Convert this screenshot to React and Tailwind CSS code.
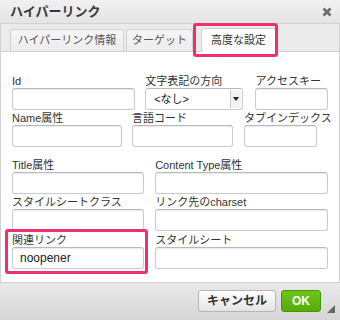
import React from "react";

const font = "font-['Liberation_Sans','Noto_Sans_CJK_JP',sans-serif]";

const Field = ({ label, value, className }) => (
  <div className={className}>
    <div className="h-[13px] text-[11px] leading-[13px] text-[#333] whitespace-nowrap">
      {label}
    </div>
    <div className="h-[22px] rounded-[3px] border border-[#c9cccf] border-t-[#b6b9bd] bg-white shadow-[inset_0_1px_1px_rgba(0,0,0,0.08)] px-[7px] text-[12px] leading-[20px] text-[#222]">
      {value}
    </div>
  </div>
);

const App = () => {
  return (
    <div className={`${font} relative w-[340px] h-[320px] flex flex-col overflow-hidden bg-white`}>
      {/* title bar */}
      <div className="h-[24px] shrink-0 flex items-center justify-between pl-[10px] pr-[8px] bg-linear-to-b from-[#f1f1f1] to-[#e4e4e4] border-b border-[#d3d3d3]">
        <span className="text-[13px] font-bold text-[#3a3a3a]">ハイパーリンク</span>
        <svg width="10" height="10" viewBox="0 0 10 10">
          <path d="M1.5 1.5 L8.5 8.5 M8.5 1.5 L1.5 8.5" stroke="#6b6b6b" strokeWidth="2.6" />
        </svg>
      </div>

      {/* tabs */}
      <div className="h-[28px] shrink-0 flex items-end pl-[9px] bg-[#ebebeb] border-b border-[#d1d1d1] border-x">
        <div className="w-[114px] h-[23px] -mb-px flex items-center justify-center rounded-t-[3px] border border-[#d1d1d1] bg-linear-to-b from-[#f6f6f6] to-[#ececec] text-[11px] text-[#555] whitespace-nowrap">
          ハイパーリンク情報
        </div>
        <div className="ml-[2px] w-[67px] h-[23px] -mb-px flex items-center justify-center rounded-t-[3px] border border-[#d1d1d1] bg-linear-to-b from-[#f6f6f6] to-[#ececec] text-[11px] text-[#555] whitespace-nowrap">
          ターゲット
        </div>
        <div className="ml-[8px] w-[75px] h-[24px] -mb-px flex items-center justify-center rounded-t-[3px] border border-b-0 border-[#d1d1d1] bg-white text-[11px] text-[#333] whitespace-nowrap">
          高度な設定
        </div>
      </div>

      {/* body */}
      <div className="flex-1 flex flex-col px-[11px] pt-[23px] border-x border-[#d1d1d1]">
        <div className="flex">
          <Field label="Id" className="w-[124px]" />
          <div className="ml-[10px] w-[99px]">
            <div className="h-[13px] text-[11px] leading-[13px] text-[#333] whitespace-nowrap">文字表記の方向</div>
            <div className="h-[22px] flex rounded-[3px] border border-[#c9cccf] border-t-[#b6b9bd] bg-white">
              <span className="flex-1 pl-[8px] text-[11px] leading-[20px] text-[#222]">&lt;なし&gt;</span>
              <span className="w-[11px] my-[1px] mr-[1px] flex items-center justify-center border-l border-[#c9cccf] bg-[#f3f3f3]">
                <svg width="6" height="4" viewBox="0 0 6 4">
                  <path d="M0 0 L6 0 L3 4 Z" fill="#222" />
                </svg>
              </span>
            </div>
          </div>
          <Field label="アクセスキー" className="ml-[12px] w-[73px]" />
        </div>

        <div className="flex mt-[2px]">
          <Field label="Name属性" className="w-[110px]" />
          <Field label="言語コード" className="ml-[10px] w-[101px]" />
          <Field label="タブインデックス" className="ml-[11px] w-[73px]" />
        </div>

        <div className="flex mt-[12px]">
          <Field label="Title属性" className="w-[133px]" />
          <Field label="Content Type属性" className="ml-[11px] w-[174px]" />
        </div>

        <div className="flex mt-[2px]">
          <Field label="スタイルシートクラス" className="w-[133px]" />
          <Field label="リンク先のcharset" className="ml-[11px] w-[174px]" />
        </div>

        <div className="flex mt-[3px]">
          <Field label="関連リンク" value="noopener" className="w-[133px]" />
          <Field label="スタイルシート" className="ml-[11px] w-[174px]" />
        </div>
      </div>

      {/* footer */}
      <div className="h-[38px] shrink-0 flex items-start justify-end gap-[5px] pt-[7px] pr-[19px] bg-linear-to-b from-[#e9e9e9] to-[#d6d6d6] border-t border-[#cfcfcf] relative">
        <button className="h-[22px] w-[78px] rounded-[3px] border border-[#b6b6b6] bg-linear-to-b from-[#ffffff] to-[#e4e4e4] text-[12px] font-bold text-[#333]">
          キャンセル
        </button>
        <button className="h-[22px] w-[40px] rounded-[3px] border border-[#3f9a05] bg-linear-to-b from-[#6fc418] to-[#55ac08] text-[12px] font-bold text-white">
          OK
        </button>
        <svg className="absolute right-[5px] bottom-[7px]" width="8" height="8" viewBox="0 0 8 8">
          <path d="M8 0 L8 8 L0 8 Z" fill="#666" />
        </svg>
      </div>

      {/* highlight boxes */}
      <div className="absolute left-[193px] top-[23px] w-[85px] h-[34px] border-[3px] border-[#f0306d] rounded-[3px]" />
      <div className="absolute left-[5px] top-[229px] w-[143px] h-[45px] border-[3px] border-[#f0306d] rounded-[3px]" />
    </div>
  );
};

export default App;
